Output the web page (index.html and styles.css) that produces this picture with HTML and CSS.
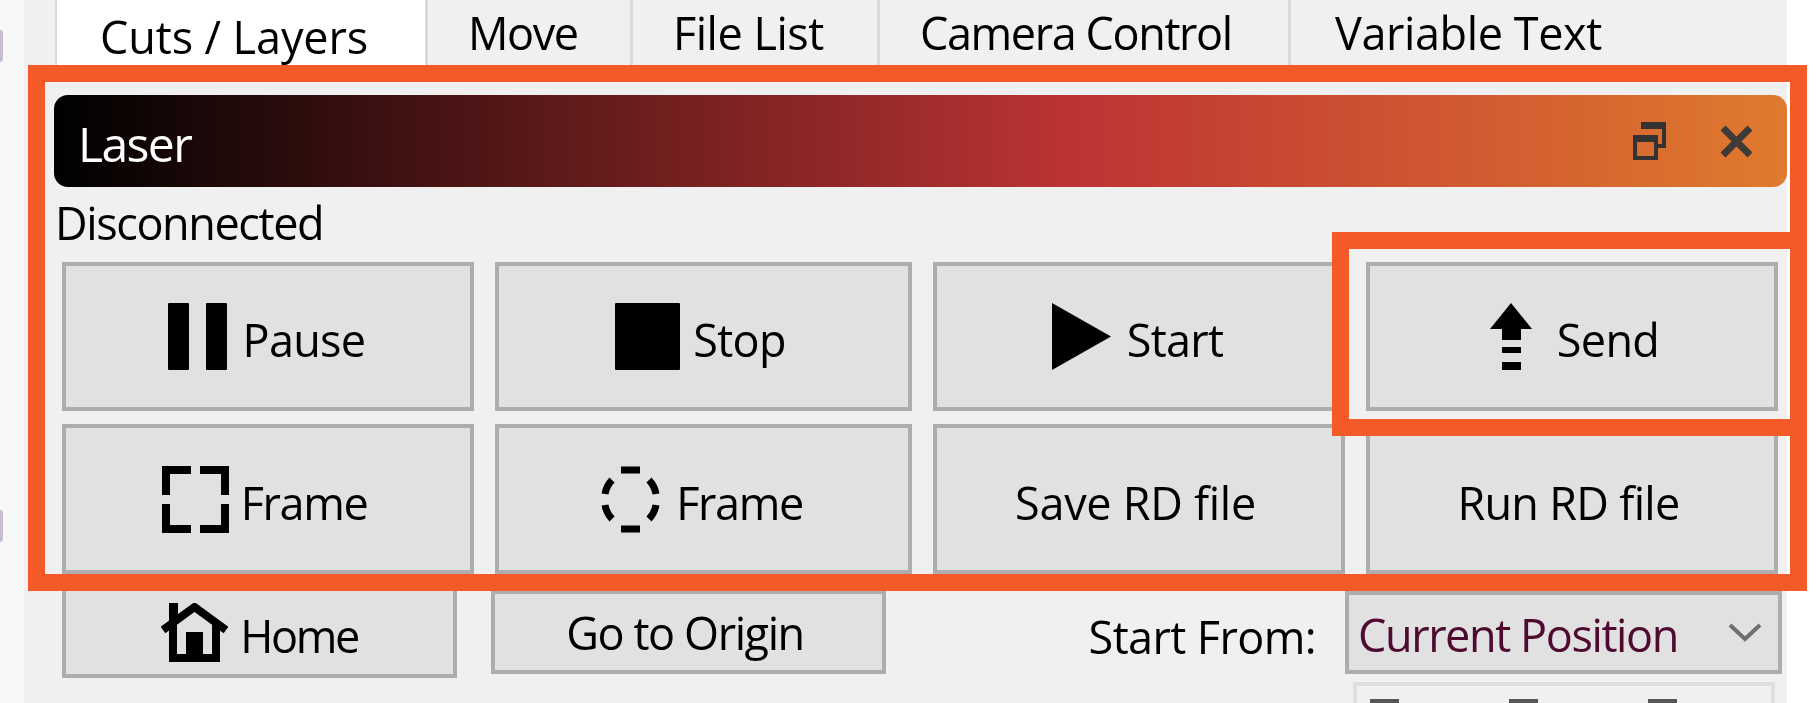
FILE: index.html
```html
<!DOCTYPE html>
<html lang="en">
<head>
    <meta charset="UTF-8">
    <meta name="viewport" content="width=device-width, initial-scale=1.0">
    <link rel="stylesheet" href="styles.css">
    <title>Laser</title>
</head>
<body>
    <div class="edge">
        <div class="speck speck-top"></div>
        <div class="speck speck-low"></div>
    </div>

    <div class="window">
        <div class="tabs">
            <div class="tab tab-active">Cuts / Layers</div>
            <div class="tab">Move</div>
            <div class="tab tab-files">File List</div>
            <div class="tab">Camera Control</div>
            <div class="tab tab-variable">Variable Text</div>
        </div>

        <div class="titlebar">
            <span class="title-text">Laser</span>
            <svg class="title-icon" width="33" height="38" viewBox="0 0 33 38">
                <path d="M8 3.5H31V24H25" fill="none" stroke="#333" stroke-width="4"/>
                <rect x="8" y="0" width="25" height="7" fill="#333"/>
                <rect x="2" y="15" width="21" height="21" fill="none" stroke="#333" stroke-width="4"/>
                <rect x="0" y="13" width="25" height="7" fill="#333"/>
            </svg>
            <svg class="title-icon close-icon" width="33" height="33" viewBox="0 0 33 33">
                <path d="M3 3L30 30M30 3L3 30" fill="none" stroke="#3d3a38" stroke-width="7"/>
            </svg>
        </div>

        <div class="status">Disconnected</div>

        <div class="button-grid">
            <div class="btn">
                <svg class="icon" width="67" height="67" viewBox="0 0 67 67">
                    <rect x="4" y="0" width="21" height="67" rx="1"/>
                    <rect x="42" y="0" width="21" height="67" rx="1"/>
                </svg>
                <span class="btn-label">Pause</span>
            </div>
            <div class="btn">
                <svg class="icon" width="67" height="67" viewBox="0 0 67 67">
                    <rect x="1" y="0" width="65" height="67" rx="1"/>
                </svg>
                <span class="btn-label">Stop</span>
            </div>
            <div class="btn">
                <svg class="icon" width="67" height="67" viewBox="0 0 67 67">
                    <path d="M4 0L63 33.5L4 67Z"/>
                </svg>
                <span class="btn-label">Start</span>
            </div>
            <div class="btn">
                <svg class="icon" width="67" height="67" viewBox="0 0 67 67">
                    <path d="M33 0L54 26H43V37H24V26H12Z"/>
                    <rect x="24" y="44" width="19" height="6"/>
                    <rect x="24" y="59" width="19" height="8"/>
                </svg>
                <span class="btn-label">Send</span>
            </div>
            <div class="btn">
                <svg class="icon" width="67" height="67" viewBox="0 0 67 67" fill="none" stroke="#000" stroke-width="8">
                    <path d="M4 29V4H29M38 4H63V29M63 38V63H38M29 63H4V38"/>
                </svg>
                <span class="btn-label btn-frame">Frame</span>
            </div>
            <div class="btn">
                <svg class="icon" width="67" height="67" viewBox="0 0 67 67" fill="none" stroke="#000" stroke-width="7">
                    <path d="M24 4H43M8 28A27 27 0 0 1 15 14M52 14A27 27 0 0 1 59 28M59 39A27 27 0 0 1 52 53M15 53A27 27 0 0 1 8 39M24 63H43"/>
                </svg>
                <span class="btn-label btn-frame">Frame</span>
            </div>
            <div class="btn"><span class="btn-label btn-wide">Save RD file</span></div>
            <div class="btn"><span class="btn-label">Run RD file</span></div>
        </div>

        <div class="bottom-row">
            <div class="btn btn-home">
                <svg class="icon" width="67" height="59" viewBox="0 0 67 59">
                    <path d="M2 27L33.5 4L65 27" fill="none" stroke="#000" stroke-width="8"/>
                    <rect x="8" y="0" width="9" height="18"/>
                    <path d="M12 20V55H55V20" fill="none" stroke="#000" stroke-width="8"/>
                    <rect x="25" y="29" width="17" height="26"/>
                </svg>
                <span class="btn-label home-label">Home</span>
            </div>
            <div class="btn btn-origin"><span class="origin-label">Go to Origin</span></div>
            <div class="start-from">
                <span class="start-label">Start From:</span>
                <div class="combo">
                    <span class="combo-text">Current Position</span>
                    <svg width="34" height="21" viewBox="0 0 34 21">
                        <path d="M2 3L17 17L32 3" fill="none" stroke="#707070" stroke-width="4"/>
                    </svg>
                </div>
                <div class="jog-box">
                    <span class="jog-dot"></span>
                    <span class="jog-dot"></span>
                    <span class="jog-dot"></span>
                </div>
            </div>
        </div>
    </div>

    <div class="right-edge"></div>

    <!-- orange callouts drawn over the screenshot -->
    <div class="mark mark-laser"></div>
    <div class="mark mark-send"></div>
</body>
</html>
```

FILE: styles.css
```css
body {
    margin: 0;
    height: 703px;
    overflow: hidden;
    display: flex;
    background-color: #f0f0f0;
    font-family: 'Open Sans', 'Noto Sans', sans-serif;
    font-size: 45px;
    letter-spacing: -1.4px;
    color: #000;
}

.edge {
    width: 24px;
    flex-shrink: 0;
    background-color: #f8f8f8;
}

.speck {
    width: 3px;
    height: 32px;
    background-color: #c8bcd4;
    border-radius: 0 3px 3px 0;
}

.speck-top {
    margin-top: 30px;
}

.speck-low {
    margin-top: 448px;
}

.right-edge {
    flex: 1;
    background-color: #fff;
}

.window {
    width: 1763px;
    height: 703px;
    flex-shrink: 0;
    padding-left: 30px;
    box-sizing: border-box;
    filter: blur(0.5px);
}

.tabs {
    display: grid;
    grid-template-columns: 373px 205px 247px 411px 496px;
    height: 65px;
    margin-left: 1px;
    border-bottom: 2px solid #d9d9d9;
    box-sizing: content-box;
}

.tab {
    padding-left: 40px;
    border-right: 3px solid #d9d9d9;
    line-height: 65px;
    box-sizing: border-box;
}

.tab:last-child {
    border-right: none;
}

.tab-active {
    padding-left: 43px;
    padding-top: 4px;
    background-color: #fff;
    border-left: 2px solid #d9d9d9;
    letter-spacing: -0.1px;
}

.tab-files {
    letter-spacing: -0.5px;
}

.tab-variable {
    padding-left: 44px;
    letter-spacing: -0.4px;
}

.titlebar {
    display: flex;
    align-items: center;
    height: 92px;
    margin-top: 28px;
    padding: 0 34px 0 24px;
    border-radius: 14px;
    background: linear-gradient(90deg, #000 0%, #bd3434 59%, #e07a2e 100%);
}

.title-text {
    flex: 1;
    padding-top: 5px;
    color: #fff;
    font-size: 48px;
    letter-spacing: -1.6px;
}

.title-icon {
    flex-shrink: 0;
}

.close-icon {
    margin-left: 54px;
}

.status {
    height: 75px;
    padding-left: 1px;
    line-height: 72px;
}

.button-grid {
    display: grid;
    grid-template-columns: 412px 417px 412px 412px;
    grid-template-rows: 149px 150px;
    gap: 13px 21px;
    margin-left: 8px;
}

.btn {
    display: flex;
    align-items: center;
    justify-content: center;
    gap: 12px;
    padding-right: 7px;
    box-sizing: border-box;
    border: 4px solid #adadad;
    background-color: #e1e1e1;
}

.btn-label {
    padding-top: 6px;
    letter-spacing: -0.7px;
}

.btn-frame {
    letter-spacing: -1.4px;
}

.btn-wide {
    letter-spacing: -0.3px;
}

.home-label {
    letter-spacing: -2.4px;
}

.origin-label {
    letter-spacing: -1.4px;
}

.icon {
    flex-shrink: 0;
}

.bottom-row {
    display: flex;
    align-items: flex-start;
    margin: 12px 5px 0 8px;
}

.btn-home {
    width: 395px;
    height: 92px;
    padding-right: 0;
}

.btn-origin {
    width: 395px;
    height: 84px;
    margin: 4px 0 0 34px;
}

.start-from {
    display: grid;
    grid-template-columns: auto 437px;
    column-gap: 29px;
    align-items: center;
    margin: 5px 0 0 auto;
}

.start-label {
    padding-top: 8px;
    letter-spacing: -0.6px;
}

.combo {
    display: flex;
    align-items: center;
    justify-content: space-between;
    height: 83px;
    padding: 0 16px 0 9px;
    box-sizing: border-box;
    border: 4px solid #adadad;
    background-color: #e1e1e1;
    color: #4f0a30;
}

.combo-text {
    padding-top: 4px;
}

.jog-box {
    grid-column: 2;
    display: flex;
    justify-content: space-between;
    height: 21px;
    margin: 8px 7px 0 8px;
    padding: 13px 94px 0 13px;
    box-sizing: border-box;
    border: 4px solid #dedede;
    border-bottom: none;
}

.jog-dot {
    width: 29px;
    height: 4px;
    background-color: #555;
}

/* callouts */
.mark {
    position: absolute;
    box-sizing: border-box;
    border: 17px solid #f35a27;
}

.mark-laser {
    left: 28px;
    top: 65px;
    width: 1779px;
    height: 526px;
}

.mark-send {
    left: 1332px;
    top: 232px;
    width: 475px;
    height: 204px;
}
```
